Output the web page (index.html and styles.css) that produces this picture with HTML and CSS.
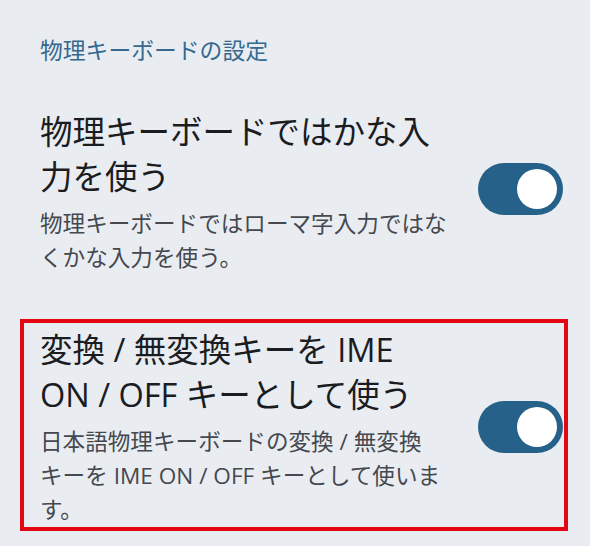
FILE: index.html
```html
<!DOCTYPE html>
<html lang="ja">
<head>
<meta charset="utf-8">
<link rel="stylesheet" href="styles.css">
</head>
<body>
<main class="screen">
  <h2 class="category">物理キーボードの設定</h2>

  <section class="pref pref-first">
    <div class="pref-text">
      <h3 class="pref-title">物理キーボードではかな入力を使う</h3>
      <p class="pref-summary">物理キーボードではローマ字入力ではなくかな入力を使う。</p>
    </div>
    <div class="switch switch-first" role="switch" aria-checked="true"><span class="thumb"></span></div>
  </section>

  <section class="pref pref-highlight">
    <div class="pref-text">
      <h3 class="pref-title">変換 / 無変換キーを IME ON / OFF キーとして使う</h3>
      <p class="pref-summary">日本語物理キーボードの変換 / 無変換キーを IME ON / OFF キーとして使います。</p>
    </div>
    <div class="switch" role="switch" aria-checked="true"><span class="thumb"></span></div>
  </section>
</main>
</body>
</html>
```

FILE: styles.css
```css
html, body {
  margin: 0;
  padding: 0;
  background: #e9edf2;
}

body {
  font-family: "Open Sans", "Noto Sans CJK JP", sans-serif;
  width: 590px;
  height: 546px;
  overflow: hidden;
  line-break: strict;
}

.screen {
  padding: 35px 27px 0 40px;
}

.category {
  margin: 0;
  font-size: 22.8px;
  line-height: 32px;
  font-weight: 400;
  color: #35698f;
}

.pref {
  display: flex;
  align-items: center;
  gap: 30px;
}

.pref-first {
  margin-top: 42px;
}

.pref-highlight {
  margin: 44px -5px 0 -20px;
  border: 4px solid #e30613;
  padding: 4px 1px 0 16px;
}

.pref-text {
  width: 408px;
  flex: none;
}

.pref-title {
  margin: 0;
  font-size: 32.5px;
  line-height: 45px;
  font-weight: 400;
  color: #1b1c1f;
}

.pref-summary {
  margin: 8px 0 0;
  font-size: 22.6px;
  line-height: 34px;
  color: #45484e;
}

.switch {
  flex: none;
  width: 85px;
  height: 52px;
  border-radius: 26px;
  background: #26618a;
  display: flex;
  align-items: center;
  justify-content: flex-end;
  padding-right: 6px;
  box-sizing: border-box;
}

.switch-first {
  margin-bottom: 7px;
}

.thumb {
  width: 40px;
  height: 40px;
  border-radius: 50%;
  background: #ffffff;
}
```
